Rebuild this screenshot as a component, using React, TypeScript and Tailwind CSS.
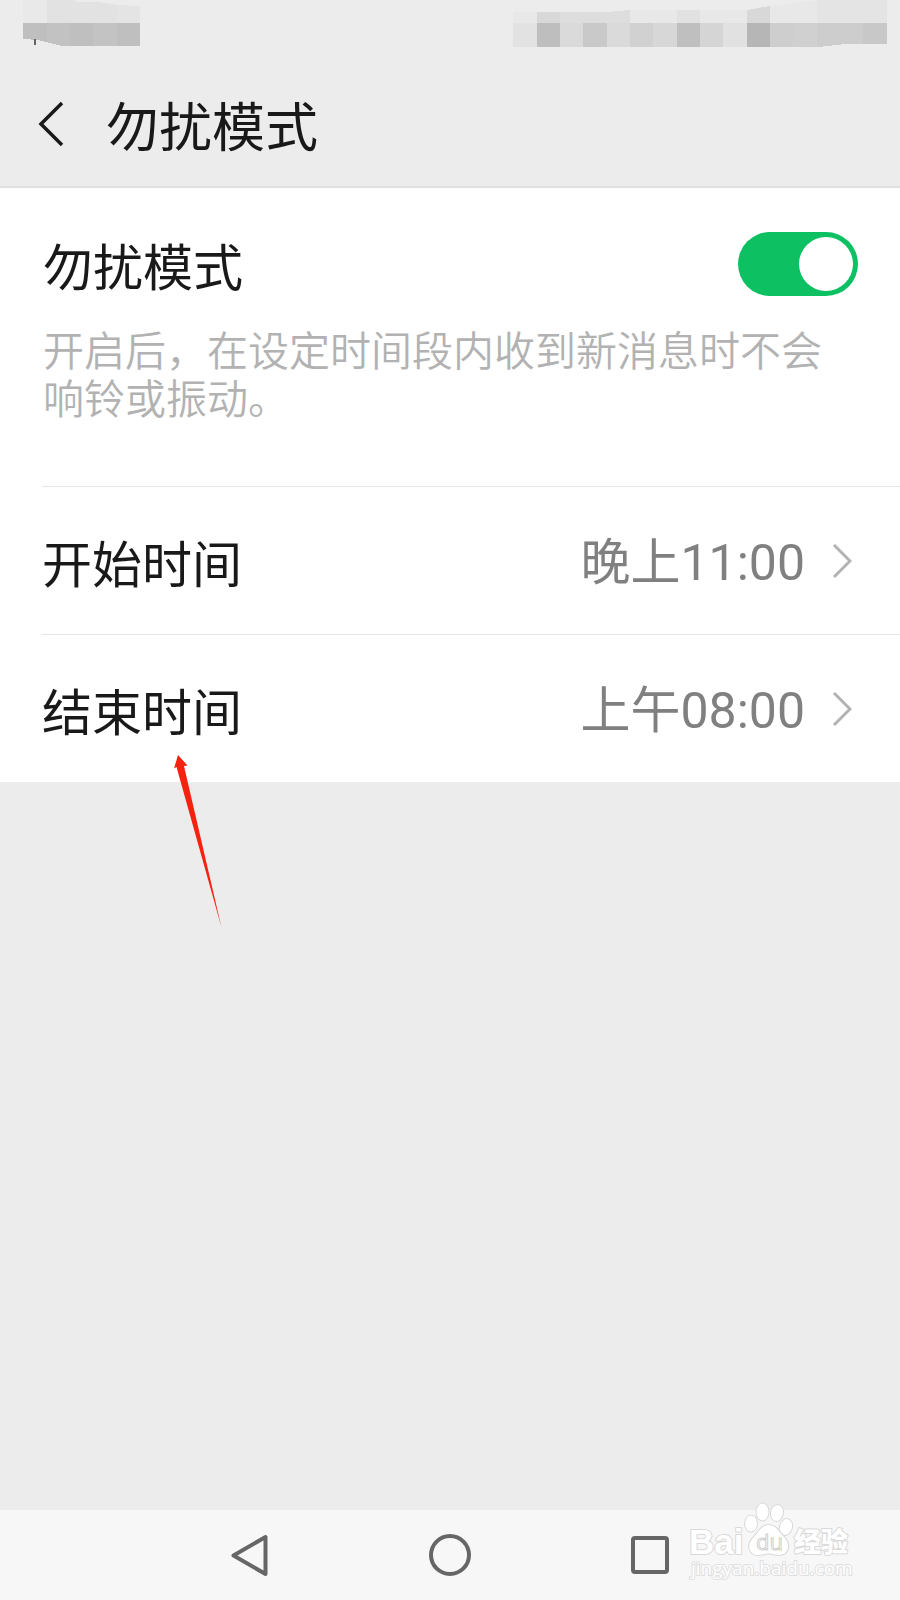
const ROWS = [
  { label: '开始时间', value: '晚上11:00' },
  { label: '结束时间', value: '上午08:00' },
];

function StatusBar() {
  const cells: [number, string][] = [
    [13, '#e2e2e2'], [37, '#bebebe'], [60, '#dadada'], [83, '#c9c9c9'], [107, '#dadada'], [130, '#d1d1d1'],
    [153, '#d7d7d7'], [177, '#bfbfbf'], [200, '#d5d5d5'], [223, '#e1e1e1'], [247, '#b6b6b6'], [270, '#cecece'],
    [293, '#d0d0d0'], [317, '#cdcdcd'], [340, '#cdcdcd'], [363, '#c8c8c8'],
  ];
  return (
    <div className="flex h-[62px] items-start justify-between" aria-hidden="true">
      <svg width="150" height="60" viewBox="0 0 150 60" shapeRendering="crispEdges">
        <path d="M23 0H47V23H23Z" fill="#e9e9e9" />
        <path d="M47 0H73L78 2L97 2L118 5L140 6V23H47Z" fill="#e2e2e2" />
        <path d="M117 5L140 6V23H117Z" fill="#e4e4e4" />
        <path d="M23 23H140V46H62L38 40L23 39Z" fill="#bfbfbf" />
        <path d="M47 23H70V46H62L47 42Z" fill="#c2c2c2" />
        <path d="M93 23H117V46H93Z" fill="#c3c3c3" />
        <path d="M34 39H36V45H34Z" fill="#666666" />
      </svg>
      <svg width="400" height="60" viewBox="0 0 400 60" shapeRendering="crispEdges">
        <path d="M13 12H37V23H13Z" fill="#e8e8e8" />
        <path d="M37 12L107 12L130 10V23H37Z" fill="#dddddd" />
        <path d="M37 12H60V23H37Z" fill="#d8d8d8" />
        <path d="M130 10H247V23H130Z" fill="#e8e8e8" />
        <path d="M177 10H200V23H177Z" fill="#e1e1e1" />
        <path d="M247 10L270 6V23H247Z" fill="#d8d8d8" />
        <path d="M270 6L317 0V23H270Z" fill="#e8e8e8" />
        <path d="M317 0H387V23H317Z" fill="#e4e4e4" />
        {cells.map(([x, fill]) => (
          <rect key={x} x={x} y="23" width="24" height="23.5" fill={fill} />
        ))}
        <path d="M387 0H400V60H387Z M318 47L345 44L387 44V47Z" fill="#ececec" />
      </svg>
    </div>
  );
}

function Chevron() {
  return (
    <svg width="20" height="36" viewBox="0 0 20 36" fill="none" stroke="#b2b2b2" strokeWidth="3" aria-hidden="true">
      <path d="M2 2L18 18L2 34" />
    </svg>
  );
}

function PointerArrow() {
  return (
    <svg className="pointer-events-none block" width="52" height="176" viewBox="0 0 52 176" aria-hidden="true">
      <path d="M6 3L15.5 13.5L12 14L49.5 175.5L4.500 15L2 16.5Z" fill="#f5220f" />
    </svg>
  );
}

function Watermark() {
  return (
    <svg className="pointer-events-none absolute bottom-[10px] right-[45px]" width="170" height="90" viewBox="0 0 170 90" aria-label="Baidu 经验">
      <g fill="#ffffff" stroke="#d9d9d9" strokeWidth="2" paintOrder="stroke" strokeLinejoin="round">
        <text x="4" y="54" fontSize="35" fontWeight="700" fontFamily="Liberation Sans, sans-serif">Bai</text>
        <text x="109" y="52" fontSize="27" fontWeight="900" fontFamily="Noto Sans CJK SC, sans-serif">经验</text>
        <ellipse cx="66" cy="23.500" rx="6" ry="8" />
        <ellipse cx="77.500" cy="12" rx="6" ry="8.500" />
        <ellipse cx="92" cy="13" rx="6" ry="8" transform="rotate(12 92 13)" />
        <ellipse cx="101" cy="27" rx="6" ry="8" transform="rotate(15 101 27)" />
        <path d="M84 25C91 25 94 32 99 37C106 44 104 55 94 55C89 55 87 53.500 84 53.500C80 53.500 78 55 73 55C63 55 62 44 68 38C74 32 76 25 84 25Z" />
      </g>
      <text x="71" y="50" fontSize="22" fontFamily="Open Sans, sans-serif" fill="#ffffff" stroke="#d0d0d0" strokeWidth="1">du</text>
      <text x="6" y="75" fontSize="19" fontFamily="Open Sans, sans-serif" fill="#ffffff" stroke="#dfdfdf" strokeWidth="2" paintOrder="stroke">jingyan.baidu.com</text>
    </svg>
  );
}

export default function App() {
  return (
    <div className="relative flex min-h-screen flex-col bg-[#ececec] font-['Noto_Sans_CJK_SC',sans-serif] text-[#191919]">
      <StatusBar />
      <header className="flex h-[126px] items-center gap-[42px] border-b-2 border-[#e0e0e0] pl-[38px]">
        <button type="button" aria-label="返回">
          <svg className="block" width="26" height="46" viewBox="0 0 26 46" fill="none" stroke="#191919" strokeWidth="3.500">
            <path d="M24 2L3 23L24 44" />
          </svg>
        </button>
        <h1 className="text-[53px] font-normal leading-[64px]">勿扰模式</h1>
      </header>

      <main className="flex-1">
        <section className="bg-white">
          <div className="pb-[62px] pl-[43px] pr-[42px] pt-[44px]">
            <div className="flex items-center justify-between">
              <label htmlFor="dnd" className="text-[50px] leading-[64px]">勿扰模式</label>
              <input
                id="dnd"
                type="checkbox"
                role="switch"
                defaultChecked
                className="flex h-[64px] w-[120px] shrink-0 appearance-none items-center rounded-full bg-[#b2b2b2] px-[5px] before:size-[54px] before:rounded-full before:bg-white checked:justify-end checked:bg-[#0dc162]"
              />
            </div>
            <p className="mt-[32px] font-['Roboto','Noto_Sans_CJK_SC',sans-serif] text-[41px] font-[350] leading-[48px] text-[#b2b2b2]">
              开启后，在设定时间段内收到新消息时不会响铃或振动。
            </p>
          </div>

          {ROWS.map((row) => (
            <div key={row.label} className="pl-[42px]">
              <button type="button" className="flex h-[148px] w-full items-center border-t border-[#e5e5e5] pr-[48px] text-left text-[50px] leading-[64px]">
                <span className="flex-1">{row.label}</span>
                <span className="mr-[27px] pt-1 font-['Roboto','Noto_Sans_CJK_SC',sans-serif] text-[#808080]">{row.value}</span>
                <Chevron />
              </button>
            </div>
          ))}
        </section>
        <div className="relative">
          <div className="absolute left-[172px] top-[-30px]">
            <PointerArrow />
          </div>
        </div>
      </main>

      <nav className="bg-[#f7f7f7]" aria-label="系统导航">
        <div className="mx-auto grid h-[90px] w-2/3 grid-cols-3 place-items-center">
          <button type="button" aria-label="后退">
            <svg className="block" width="44" height="44" viewBox="0 0 44 44" fill="none" stroke="#666666" strokeWidth="4" strokeLinejoin="round">
              <path d="M37.500 4V41L5.500 22.500Z" />
            </svg>
          </button>
          <button type="button" aria-label="主屏幕">
            <svg className="block" width="44" height="44" viewBox="0 0 44 44" fill="none" stroke="#666666" strokeWidth="4">
              <circle cx="22" cy="22" r="19" />
            </svg>
          </button>
          <button type="button" aria-label="最近任务">
            <svg className="block" width="44" height="44" viewBox="0 0 44 44" fill="none" stroke="#666666" strokeWidth="4">
              <rect x="5" y="5" width="34" height="34" rx="2" />
            </svg>
          </button>
        </div>
      </nav>
      <Watermark />
    </div>
  );
}
